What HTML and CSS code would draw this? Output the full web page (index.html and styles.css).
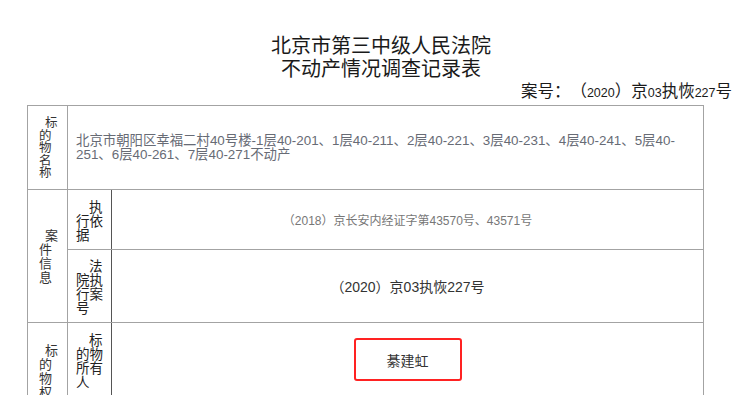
FILE: index.html
```html
<!DOCTYPE html>
<html lang="zh-CN">
<head>
<meta charset="utf-8">
<title>不动产情况调查记录表</title>
<link rel="stylesheet" href="styles.css">
</head>
<body>
<div class="page">
  <header class="doc-head">
    <h1 class="doc-title">北京市第三中级人民法院<br>不动产情况调查记录表</h1>
    <p class="case-no">案号：（<span class="num">2020</span>）京<span class="num">03</span>执恢<span class="num">227</span>号</p>
  </header>
  <table class="record">
    <colgroup><col class="c1"><col class="c2"><col class="c3"></colgroup>
    <tr class="r-name">
      <th class="lab1"><div class="vt vt-tight">标<br>的<br>物<br>名<br>称</div></th>
      <td colspan="2" class="val-name">北京市朝阳区幸福二村40号楼-1层40-201、1层40-211、2层40-221、3层40-231、4层40-241、5层40-<br>251、6层40-261、7层40-271不动产</td>
    </tr>
    <tr class="r-basis">
      <th rowspan="2" class="lab1"><div class="vt">案<br>件<br>信<br>息</div></th>
      <th class="lab2"><div class="vt2">执<br>行依<br>据</div></th>
      <td class="val val-small">（2018）京长安内经证字第43570号、43571号</td>
    </tr>
    <tr class="r-case">
      <th class="lab2"><div class="vt2">法<br>院执<br>行案<br>号</div></th>
      <td class="val">（2020）京03执恢227号</td>
    </tr>
    <tr class="r-owner">
      <th rowspan="2" class="lab1 lab-top"><div class="vt">标<br>的<br>物<br>权<br>属<br>情<br>况</div></th>
      <th class="lab2"><div class="vt2">标<br>的物<br>所有<br>人</div></th>
      <td class="val"><span class="mark">綦建虹</span></td>
    </tr>
    <tr class="r-share">
      <th class="lab2"><div class="vt2">共<br>有情<br>况</div></th>
      <td class="val">无</td>
    </tr>
  </table>
</div>
</body>
</html>
```

FILE: styles.css
```css
html, body {
  margin: 0;
  padding: 0;
  background: #ffffff;
}

body {
  font-family: "Liberation Sans", "Noto Sans CJK SC", sans-serif;
  color: #333333;
}

.page {
  width: 740px;
}

.doc-head {
  padding-top: 33px;
}

.doc-title {
  margin: 0 0 0 22px;
  font-family: "Noto Sans CJK SC", sans-serif;
  font-weight: 400;
  font-size: 20px;
  line-height: 23px;
  text-align: center;
  color: #1a1a1a;
}

.case-no {
  margin: 1px 0 0 0;
  padding-right: 8px;
  text-align: right;
  font-family: "Noto Sans CJK SC", sans-serif;
  font-size: 16.5px;
  line-height: 20px;
  color: #1a1a1a;
  text-spacing-trim: space-all;
}

.case-no .num {
  font-family: "Liberation Sans Narrow", "Liberation Sans", sans-serif;
  font-size: 12.5px;
}

.record {
  margin: 2px 0 0 27px;
  width: 677px;
  border-collapse: collapse;
  table-layout: fixed;
  border: 1px solid #8a8a8a;
}

.c1 { width: 40px; }
.c2 { width: 44px; }
.c3 { width: auto; }

.record th,
.record td {
  border: 1px solid #a3a3a3;
  padding: 0;
  font-weight: 400;
}

.record .lab2 {
  border-left-color: #555555;
  border-right-color: #555555;
}

.r-name { height: 84px; }
.r-basis { height: 60px; }
.r-case { height: 73px; }
.r-owner { height: 74px; }
.r-share { height: 60px; }

.lab1 {
  vertical-align: middle;
  text-align: left;
  padding-left: 11px !important;
}

.lab-top {
  vertical-align: top;
  padding-top: 20px !important;
}

.vt {
  font-family: "Noto Sans CJK SC", sans-serif;
  font-size: 13px;
  line-height: 14px;
  color: #333333;
  text-indent: 6px;
}

.vt-tight {
  font-size: 12.5px;
  line-height: 12.5px;
}

.lab2 {
  vertical-align: middle;
  text-align: left;
  padding-left: 8px !important;
}

.vt2 {
  font-family: "Noto Sans CJK SC", sans-serif;
  font-size: 13.5px;
  line-height: 14px;
  color: #222222;
  text-indent: 13px;
}

.val-name {
  padding: 0 8px !important;
  vertical-align: middle;
  white-space: nowrap;
  font-size: 13.4px;
  line-height: 14px;
  color: #676b75;
}

.val {
  text-align: center;
  vertical-align: middle;
  font-size: 14px;
  color: #333333;
}

.val-small {
  font-size: 12px;
  color: #777777;
}

.mark {
  display: inline-flex;
  align-items: center;
  justify-content: center;
  box-sizing: border-box;
  width: 108px;
  height: 43px;
  border: 2px solid #ff2222;
  border-radius: 3px;
  font-size: 14px;
  color: #333333;
}
```
